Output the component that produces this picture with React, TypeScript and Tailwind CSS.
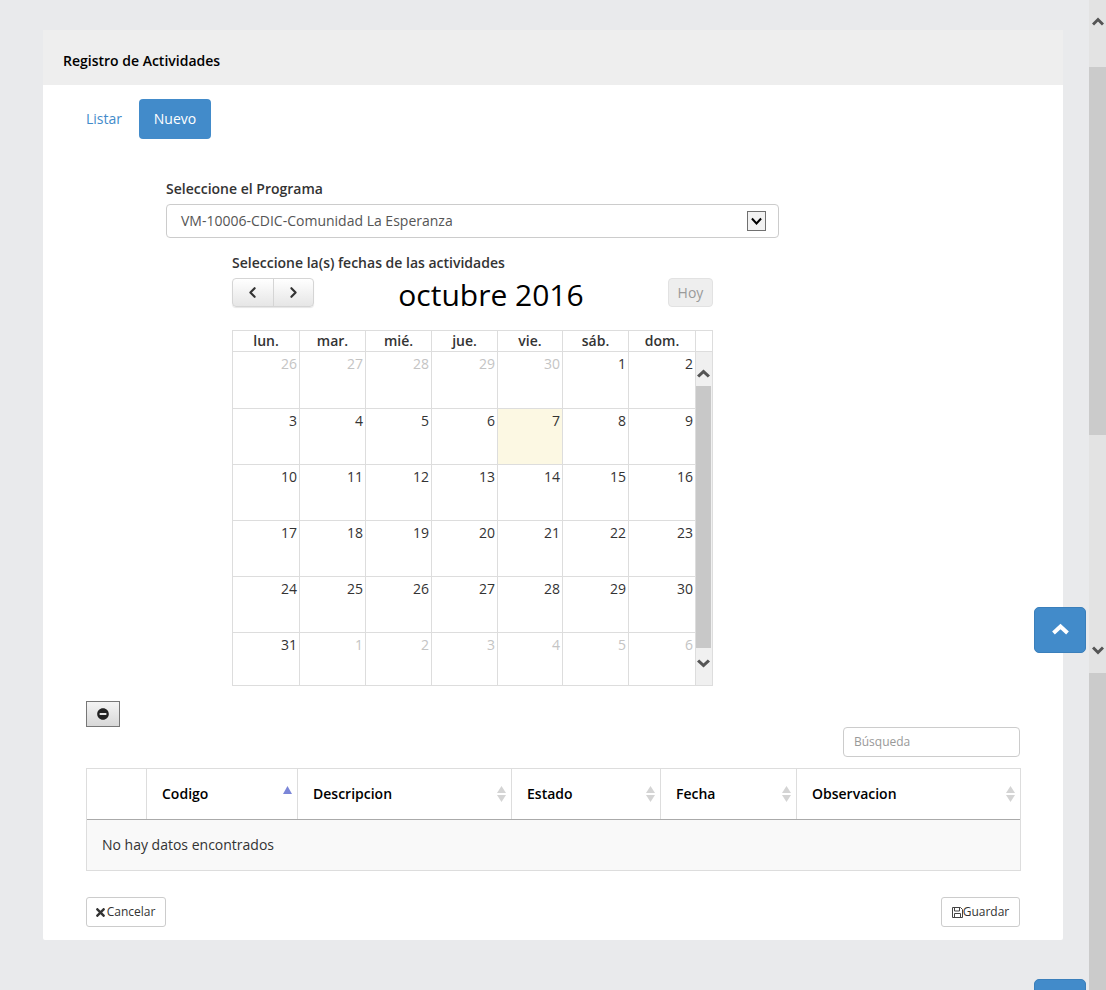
import { ChevronLeft, ChevronRight } from 'lucide-react';
import { FaMinusCircle, FaTimes } from 'react-icons/fa';

const colWidths = 'grid-cols-[67px_66px_66px_66px_65px_66px_67px]';

const dayNames = ['lun.', 'mar.', 'mié.', 'jue.', 'vie.', 'sáb.', 'dom.'];

const weeks: { n: number; off?: boolean; today?: boolean }[][] = [
  [{ n: 26, off: true }, { n: 27, off: true }, { n: 28, off: true }, { n: 29, off: true }, { n: 30, off: true }, { n: 1 }, { n: 2 }],
  [{ n: 3 }, { n: 4 }, { n: 5 }, { n: 6 }, { n: 7, today: true }, { n: 8 }, { n: 9 }],
  [{ n: 10 }, { n: 11 }, { n: 12 }, { n: 13 }, { n: 14 }, { n: 15 }, { n: 16 }],
  [{ n: 17 }, { n: 18 }, { n: 19 }, { n: 20 }, { n: 21 }, { n: 22 }, { n: 23 }],
  [{ n: 24 }, { n: 25 }, { n: 26 }, { n: 27 }, { n: 28 }, { n: 29 }, { n: 30 }],
  [{ n: 31 }, { n: 1, off: true }, { n: 2, off: true }, { n: 3, off: true }, { n: 4, off: true }, { n: 5, off: true }, { n: 6, off: true }],
];

const rowHeights = ['h-[57px]', 'h-[56px]', 'h-[56px]', 'h-[56px]', 'h-[56px]', 'h-[52px]'];

const columns = [
  { label: 'Codigo', width: 'w-[151px]', active: true },
  { label: 'Descripcion', width: 'w-[214px]' },
  { label: 'Estado', width: 'w-[149px]' },
  { label: 'Fecha', width: 'w-[136px]' },
  { label: 'Observacion', width: 'flex-1' },
];

// heavy mitred chevron, the scrollbar arrows are chunkier than lucide's
function Chevron({
  down,
  color = '#555',
  width = 12,
  stroke = 3,
}: {
  down?: boolean;
  color?: string;
  width?: number;
  stroke?: number;
}) {
  return (
    <svg width={width} height="9" viewBox="0 0 12 9" preserveAspectRatio="none">
      <path
        d={down ? 'M1 1.5L6 6.5L11 1.5' : 'M1 7.5L6 2.5L11 7.5'}
        fill="none"
        stroke={color}
        strokeWidth={stroke}
      />
    </svg>
  );
}

function SaveIcon() {
  return (
    <svg width="11" height="11" viewBox="0 0 11 11">
      <path d="M0.5 0.5H8.5L10.5 2.5V10.5H0.5z" fill="none" stroke="#444" />
      <path d="M2.5 1V4H7.5V1" fill="none" stroke="#444" />
      <path d="M2.5 10V6.5H8.5V10" fill="none" stroke="#444" />
    </svg>
  );
}

function SortArrows({ active }: { active?: boolean }) {
  if (active) {
    return (
      <svg className="absolute right-[5px] top-[17px]" width="9" height="8" viewBox="0 0 9 8">
        <path d="M4.5 0L9 8H0z" fill="#7b86d8" />
      </svg>
    );
  }
  return (
    <svg className="absolute right-[5px] top-[17px]" width="9" height="16" viewBox="0 0 9 16">
      <path d="M4.5 0L9 7H0z" fill="#d4d4d4" />
      <path d="M4.5 16L0 9h9z" fill="#d4d4d4" />
    </svg>
  );
}

function Calendar() {
  return (
    <div className="ml-[146px] mt-[15px] w-[481px]">
      <div className="text-[14px] font-semibold leading-[20px] text-[#333]">
        Seleccione la(s) fechas de las actividades
      </div>
      <div className="mt-[5px] flex h-[29px] items-start justify-between">
        <div className="flex h-[29px] w-[82px] rounded-[4px] border border-[#d5d5d5] bg-gradient-to-b from-white to-[#e6e6e6] shadow-[0_1px_1px_rgba(0,0,0,0.1)]">
          <div className="flex flex-1 items-center justify-center border-r border-[#d5d5d5]">
            <ChevronLeft size={17} strokeWidth={3} color="#333" />
          </div>
          <div className="flex flex-1 items-center justify-center">
            <ChevronRight size={17} strokeWidth={3} color="#333" />
          </div>
        </div>
        <div className="text-[30px] leading-[34px] text-black">octubre 2016</div>
        <div className="flex h-[29px] w-[45px] items-center justify-center rounded-[4px] border border-[#e2e2e2] bg-[#eeeeee] text-[14px] text-[#9a9a9a]">
          Hoy
        </div>
      </div>

      <div className="mt-[23px] border border-[#dddddd]">
        <div className="flex h-[21px] border-b border-[#dddddd]">
          <div className={`grid flex-1 ${colWidths}`}>
            {dayNames.map((d) => (
              <div
                key={d}
                className="border-r border-[#dddddd] text-center text-[14px] font-semibold leading-[19px] text-[#333]"
              >
                {d}
              </div>
            ))}
          </div>
          <div className="w-[16px]" />
        </div>
        <div className="flex">
          <div className="flex-1">
            {weeks.map((week, w) => (
              <div key={w} className={`grid ${colWidths} ${rowHeights[w]} ${w < 5 ? 'border-b border-[#dddddd]' : ''}`}>
                {week.map((day, i) => (
                  <div
                    key={i}
                    className={`border-r border-[#dddddd] pr-[2px] pt-[2px] text-right text-[14px] leading-[20px] ${day.off ? 'text-[#c4c4c4]' : 'text-[#333]'} ${day.today ? 'bg-[#fcf8e3]' : ''}`}
                  >
                    {day.n}
                  </div>
                ))}
              </div>
            ))}
          </div>
          <div className="flex w-[16px] flex-col items-center bg-[#f0f0f0] pr-[1px]">
            <div className="flex h-[34px] w-full items-end justify-center pb-[8px]">
              <Chevron width={13} />
            </div>
            <div className="h-[262px] w-full bg-[#c8c8c8]" />
            <div className="flex w-full flex-1 items-start justify-center pt-[11px]">
              <Chevron down width={13} />
            </div>
          </div>
        </div>
      </div>
    </div>
  );
}

function Card() {
  return (
    <div className="ml-[43px] mt-[30px] h-[910px] w-[1020px] rounded-[2px] bg-white">
      <div className="flex h-[55px] items-center bg-[#eeeeee] pl-[20px] pt-[6px] text-[14px] font-semibold text-black">
        Registro de Actividades
      </div>
      <div className="px-[43px]">
        <div className="mt-[14px] flex h-[40px] items-center">
          <a className="pb-[2px] text-[14px] text-[#428bca]">Listar</a>
          <button className="ml-[17px] h-[40px] w-[72px] rounded-[4px] bg-[#428bca] pb-[2px] text-[14px] text-white">
            Nuevo
          </button>
        </div>

        <div className="ml-[80px] mt-[40px] w-[613px]">
          <div className="text-[14px] font-semibold leading-[20px] text-[#333]">Seleccione el Programa</div>
          <div className="mt-[5px] flex h-[34px] items-center justify-between rounded-[4px] border border-[#cccccc] pl-[14px] pr-[12px] text-[14px] text-[#555]">
            <span className="pb-[2px]">VM-10006-CDIC-Comunidad La Esperanza</span>
            <span className="flex h-[20px] w-[19px] items-center justify-center border border-[#707070] bg-[#f2f2f2]">
              <Chevron down color="#000" width={11} stroke={2.25} />
            </span>
          </div>
        </div>

        <Calendar />

        <button className="mt-[15px] flex h-[26px] w-[34px] items-center justify-center border border-[#777] bg-gradient-to-b from-[#f4f4f4] to-[#d8d8d8]">
          <FaMinusCircle size={12} color="#222" />
        </button>

        <div className="flex justify-end">
          <div className="flex h-[30px] w-[177px] items-center rounded-[4px] border border-[#cccccc] pl-[10px] text-[12px] text-[#999]">
            Búsqueda
          </div>
        </div>

        <div className="mt-[11px] w-[935px] border border-[#dddddd]">
          <div className="flex h-[51px] border-b border-b-[#aaaaaa]">
            <div className="w-[60px] border-r border-[#dddddd]" />
            {columns.map((c, i) => (
              <div
                key={c.label}
                className={`relative flex items-center pb-[2px] pl-[15px] text-[14px] font-semibold text-black ${c.width} ${i < 4 ? 'border-r border-[#dddddd]' : ''}`}
              >
                {c.label}
                <SortArrows active={c.active} />
              </div>
            ))}
          </div>
          <div className="flex h-[50px] items-center bg-[#f9f9f9] pb-[2px] pl-[15px] text-[14px] text-[#333]">
            No hay datos encontrados
          </div>
        </div>

        <div className="mt-[26px] flex justify-between">
          <button className="flex h-[30px] w-[80px] items-center justify-center rounded-[3px] border border-[#cccccc] pr-[3px] text-[12px] text-[#333]">
            <FaTimes size={13} color="#333" />
            Cancelar
          </button>
          <button className="flex h-[30px] w-[79px] items-center justify-center rounded-[3px] border border-[#cccccc] text-[12px] text-[#333]">
            <SaveIcon />
            Guardar
          </button>
        </div>
      </div>
    </div>
  );
}

function PageScrollbar() {
  return (
    <div className="flex h-[990px] w-[17px] shrink-0 flex-col items-center bg-[#e3e3e3]">
      <div className="flex h-[67px] w-full items-start justify-center pt-[17px]">
        <Chevron />
      </div>
      <div className="h-[368px] w-full bg-[#cbcbcb]" />
      <div className="flex h-[238px] w-full items-end justify-center pb-[18px]">
        <Chevron down />
      </div>
      <div className="w-full flex-1 bg-[#cbcbcb]" />
    </div>
  );
}

export default function App() {
  return (
    <div
      className="relative flex h-[990px] w-[1106px] overflow-hidden bg-[#e9eaec]"
      style={{ fontFamily: '"Open Sans", sans-serif' }}
    >
      <div className="flex-1">
        <Card />
      </div>
      <PageScrollbar />

      <button className="absolute left-[1034px] top-[607px] flex h-[46px] w-[52px] items-center justify-center rounded-[5px] border border-[#3a7fbb] bg-[#428bca] pb-[2px]">
        <svg width="17" height="12" viewBox="0 0 17 12">
          <path d="M1.5 10L8.5 3.5L15.5 10" fill="none" stroke="#fff" strokeWidth="4" />
        </svg>
      </button>
      <button className="absolute left-[1034px] top-[979px] h-[46px] w-[52px] rounded-[5px] border border-[#3a7fbb] bg-[#428bca]" />
    </div>
  );
}
